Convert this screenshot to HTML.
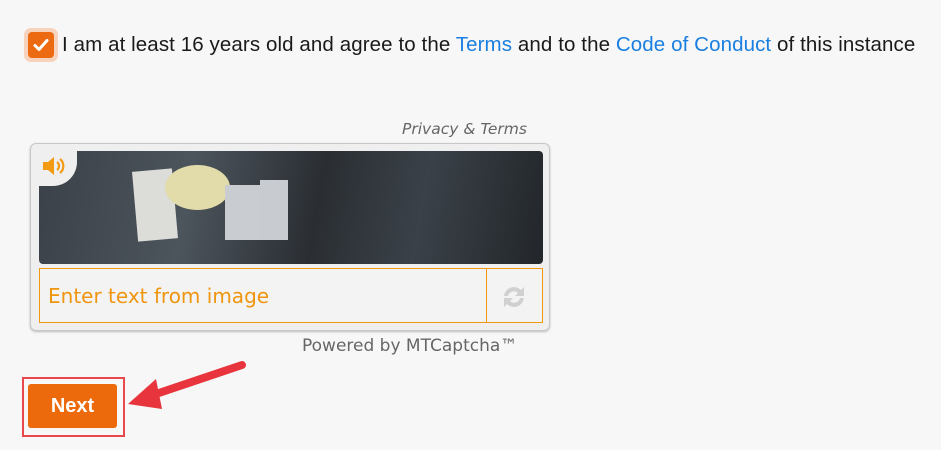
<!DOCTYPE html>
<html><head><style>
body{margin:0;width:941px;height:450px;background:#f7f7f7;font-family:"DejaVu Sans","Liberation Sans",sans-serif;position:relative;overflow:hidden}
.a{position:absolute}
</style></head><body>
<div class="a" style="left:24px;top:28px;width:34px;height:34px;border-radius:7px;background:#f7d3bd"></div>
<div class="a" style="left:28px;top:32px;width:26px;height:26px;border-radius:4px;background:#ec6a12"></div>
<svg class="a" style="left:28px;top:32px" width="26" height="26"><path d="M7 13.5l4 4 8-9" stroke="#fff" stroke-width="3" fill="none" stroke-linecap="round" stroke-linejoin="round"/></svg>
<div class="a" style="left:62px;top:33px;font-family:'Liberation Sans',sans-serif;font-size:20.5px;color:#1a1a1a;white-space:nowrap;letter-spacing:0.1px">I am at least 16 years old and agree to the <span style="color:#1a7fe0">Terms</span> and to the <span style="color:#1a7fe0">Code of Conduct</span> of this instance</div>
<div class="a" style="left:402px;top:120px;font-size:15.5px;font-style:italic;color:#666;white-space:nowrap">Privacy &amp; Terms</div>
<div class="a" style="left:30px;top:143px;width:518px;height:186px;border:1px solid #c8c8c8;border-radius:6px;background:#efefef;box-shadow:0 1px 2px #bbb"></div>
<div class="a" style="left:39px;top:151px;width:504px;height:113px;border-radius:4px;background:linear-gradient(100deg,#3b4148 0%,#4c545c 30%,#2a2e33 55%,#3a4148 75%,#22262a 100%)"></div>
<div class="a" style="left:135px;top:170px;width:40px;height:70px;background:#dcdcd8;transform:rotate(-5deg)"></div>
<div class="a" style="left:165px;top:165px;width:65px;height:45px;border-radius:50%;background:#e2dcaa"></div>
<div class="a" style="left:225px;top:185px;width:35px;height:55px;background:#c9cdd1"></div>
<div class="a" style="left:260px;top:180px;width:28px;height:60px;background:#c8ccd0"></div>
<div class="a" style="left:39px;top:151px;width:38px;height:35px;background:#efefef;border-bottom-right-radius:24px"></div>
<svg class="a" style="left:41px;top:154px" width="30" height="24"><path d="M2 8h5l6-5v18l-6-5H2z" fill="#f19a12"/><path d="M16 8a5 5 0 0 1 0 8M19 5a9 9 0 0 1 0 14" stroke="#f19a12" stroke-width="2.2" fill="none"/></svg>
<div class="a" style="left:39px;top:268px;width:502px;height:53px;border:1px solid #f0990e;background:#f3f3f3"></div>
<div class="a" style="left:486px;top:268px;width:1px;height:55px;background:#f0990e"></div>
<div class="a" style="left:48px;top:284px;font-size:20px;color:#ef950f;white-space:nowrap">Enter text from image</div>
<svg class="a" style="left:500px;top:283px" width="28" height="28"><path d="M4 13a10 10 0 0 1 17-6l3-3v9h-9l3-3a6 6 0 0 0-10 3z M24 15a10 10 0 0 1-17 6l-3 3v-9h9l-3 3a6 6 0 0 0 10-3z" fill="#d0d0d0"/></svg>
<div class="a" style="left:302px;top:336px;font-size:17px;color:#666;white-space:nowrap">Powered by MTCaptcha™</div>
<div class="a" style="left:22px;top:377px;border:2px solid #e8474e;box-sizing:border-box;width:103px;height:60px"></div>
<div class="a" style="left:28px;top:384px;width:89px;height:44px;background:#ec6a0c;border-radius:3px;color:#fff;font-family:'Liberation Sans',sans-serif;font-weight:bold;font-size:20px;text-align:center;line-height:44px">Next</div>
<svg class="a" style="left:120px;top:355px" width="135" height="60"><path d="M122 10L30 41" stroke="#e8353d" stroke-width="8" stroke-linecap="round"/><path d="M8 49L36 24L42 54z" fill="#e8353d"/></svg>
</body></html>
